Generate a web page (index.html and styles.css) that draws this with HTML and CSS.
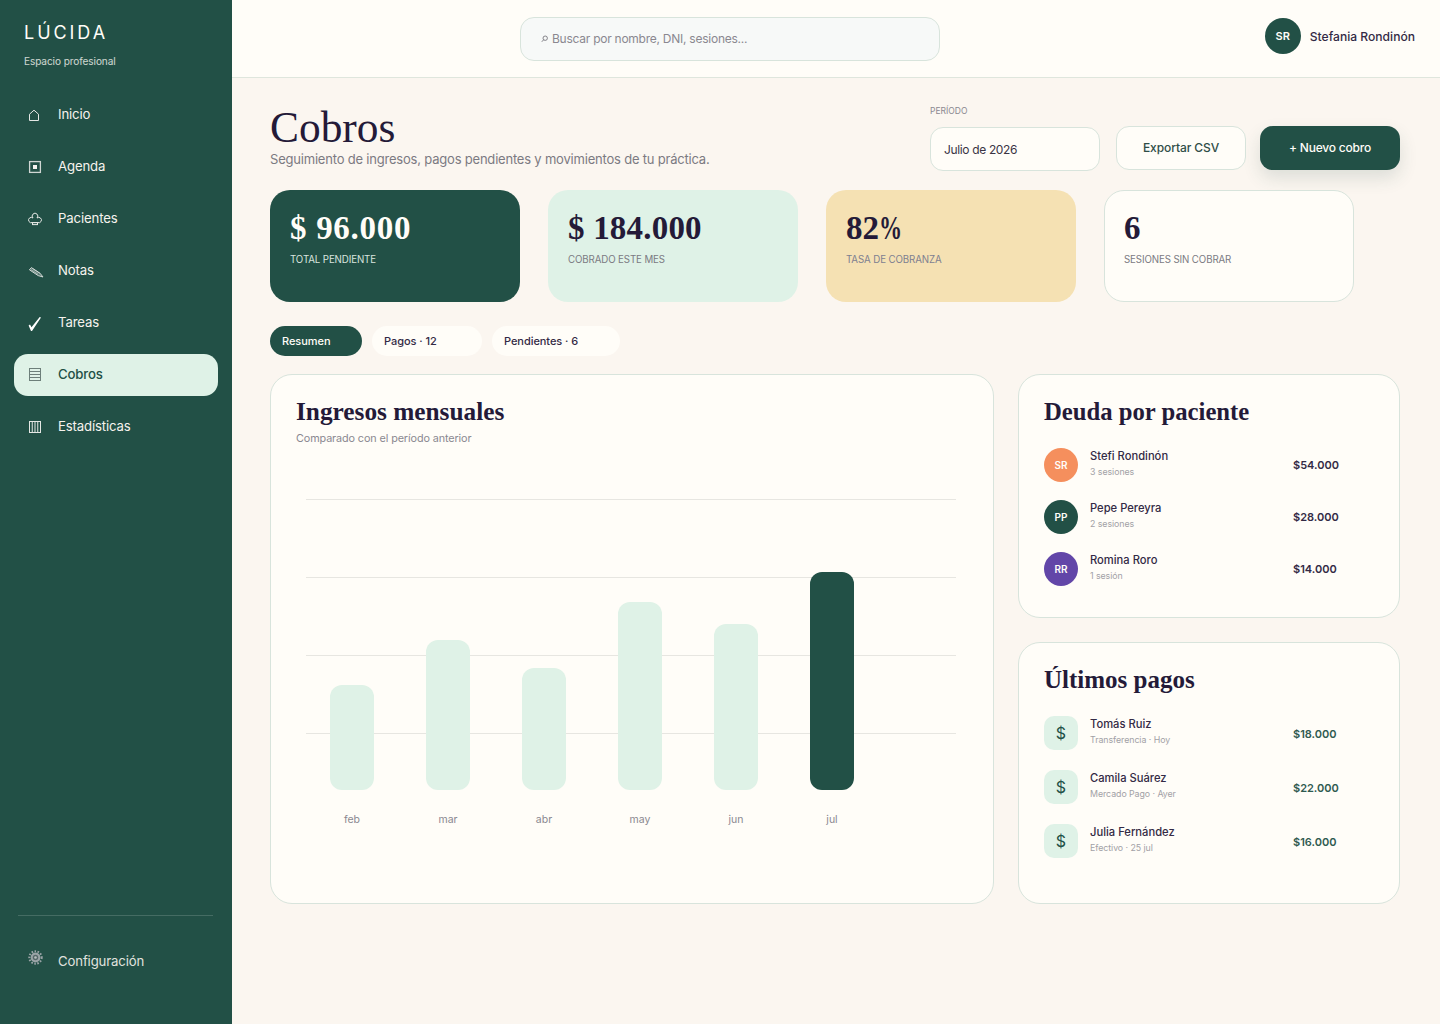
FILE: index.html
```html
<!DOCTYPE html>
<html lang="es">
<head>
<meta charset="utf-8">
<title>Lúcida · Cobros</title>
<link rel="stylesheet" href="styles.css">
</head>
<body>
<div class="app">
  <aside class="sidebar">
    <div class="brand">
      <div class="brand-name">LÚCIDA</div>
      <div class="brand-sub">Espacio profesional</div>
    </div>
    <nav class="nav">
      <a class="nav-item">
        <svg class="nav-icon" viewBox="0 0 16 16"><path class="ln" d="M1.5 13.5V7.2L6 3.2l4.5 4v6.3z"/></svg>
        <span>Inicio</span></a>
      <a class="nav-item">
        <svg class="nav-icon" viewBox="0 0 16 16"><rect class="ln ln-thick" x="1.6" y="2.6" width="10.8" height="10.8"/><rect class="fl" x="5" y="6" width="4" height="4"/></svg>
        <span>Agenda</span></a>
      <a class="nav-item">
        <svg class="nav-icon" viewBox="0 0 16 16"><path class="ln" d="M5 7A2.8 2.8 0 1 1 9 7 2.7 2.7 0 1 1 9.8 11.6H4.2A2.7 2.7 0 1 1 5 7z"/><rect class="ln" x="4.5" y="11.6" width="5" height="2"/></svg>
        <span>Pacientes</span></a>
      <a class="nav-item">
        <svg class="nav-icon" viewBox="0 0 16 16"><path class="ln ln-soft" d="M1.4 6.8 3.4 4.6 12 10.2 15 14 10.2 12.6z"/><path class="ln ln-thin" d="M3 6.6l7 4.6M4.6 5.6l7 4.6"/></svg>
        <span>Notas</span></a>
      <a class="nav-item">
        <svg class="nav-icon" viewBox="0 0 16 16"><path class="fl fl-white" d="M.6 10.6 2 9.6l1.5 2.7L11.7 2l1.3.6L4 16H3z"/></svg>
        <span>Tareas</span></a>
      <a class="nav-item nav-item-active">
        <svg class="nav-icon" viewBox="0 0 16 16"><rect class="ln" x="1.5" y="1.5" width="11" height="12"/><path class="ln" d="M1.5 4.5h11M1.5 7.5h11M1.5 10.5h11"/></svg>
        <span>Cobros</span></a>
      <a class="nav-item">
        <svg class="nav-icon" viewBox="0 0 16 16"><rect class="ln" x="1.5" y="2.5" width="11" height="11"/><path class="ln" d="M4.25 2.5v11M7 2.5v11M9.75 2.5v11"/></svg>
        <span>Estadísticas</span></a>
    </nav>
    <div class="sidebar-foot">
      <a class="nav-item nav-item-foot">
        <svg class="nav-icon nav-icon-gear" viewBox="0 0 16 16"><circle class="gear-teeth" cx="7.5" cy="7.5" r="6.2"/><circle class="gear-ring" cx="7.5" cy="7.5" r="4.9"/><circle class="gear-hole" cx="7.5" cy="7.5" r="2.7"/><circle class="gear-core" cx="7.5" cy="7.5" r="1.3"/></svg>
        <span>Configuración</span></a>
    </div>
  </aside>
  <div class="content">
    <header class="topbar">
      <div class="search">
        <svg class="search-icon" viewBox="0 0 7 8"><circle cx="4.2" cy="3.2" r="2.2"/><path d="M2.6 4.8.8 6.8"/></svg>
        <span>Buscar por nombre, DNI, sesiones...</span></div>
      <div class="user">
        <span class="user-avatar">SR</span>
        <span class="user-name">Stefania Rondinón</span>
      </div>
    </header>
    <main class="main">
      <section class="head">
        <div class="head-title">
          <h1>Cobros</h1>
          <p>Seguimiento de ingresos, pagos pendientes y movimientos de tu práctica.</p>
        </div>
        <div class="head-actions">
          <div class="period">
            <span class="period-label">PERÍODO</span>
            <div class="period-input">Julio de 2026</div>
          </div>
          <button class="btn btn-ghost">Exportar CSV</button>
          <button class="btn btn-primary">+ Nuevo cobro</button>
        </div>
      </section>
      <section class="stats">
        <div class="stat stat-green"><div class="stat-value">$ 96.000</div><div class="stat-label">TOTAL PENDIENTE</div></div>
        <div class="stat stat-mint"><div class="stat-value">$ 184.000</div><div class="stat-label">COBRADO ESTE MES</div></div>
        <div class="stat stat-yellow"><div class="stat-value">82<span class="pct">%</span></div><div class="stat-label">TASA DE COBRANZA</div></div>
        <div class="stat stat-white"><div class="stat-value">6</div><div class="stat-label">SESIONES SIN COBRAR</div></div>
      </section>
      <div class="tabs">
        <span class="tab tab-active tab-a">Resumen</span>
        <span class="tab tab-b">Pagos · 12</span>
        <span class="tab tab-c">Pendientes · 6</span>
      </div>
      <section class="panels">
        <article class="card card-chart">
          <h2>Ingresos mensuales</h2>
          <p class="card-sub">Comparado con el período anterior</p>
          <div class="plot">
            <div class="plot-lines"><i></i><i></i><i></i><i></i></div>
            <div class="plot-bars">
              <div class="bar" style="height:105px"></div>
              <div class="bar" style="height:150px"></div>
              <div class="bar" style="height:122px"></div>
              <div class="bar" style="height:188px"></div>
              <div class="bar" style="height:166px"></div>
              <div class="bar bar-now" style="height:218px"></div>
            </div>
          </div>
          <div class="months"><span>feb</span><span>mar</span><span>abr</span><span>may</span><span>jun</span><span>jul</span></div>
        </article>
        <div class="side">
          <article class="card card-debt">
            <h2>Deuda por paciente</h2>
            <ul class="rows rows-debt">
              <li class="row"><span class="avatar avatar-orange">SR</span><div class="who"><b>Stefi Rondinón</b><small>3 sesiones</small></div><span class="amount">$54.000</span></li>
              <li class="row"><span class="avatar avatar-green">PP</span><div class="who"><b>Pepe Pereyra</b><small>2 sesiones</small></div><span class="amount">$28.000</span></li>
              <li class="row"><span class="avatar avatar-purple">RR</span><div class="who"><b>Romina Roro</b><small>1 sesión</small></div><span class="amount">$14.000</span></li>
            </ul>
          </article>
          <article class="card card-pay">
            <h2>Últimos pagos</h2>
            <ul class="rows rows-pay">
              <li class="row"><span class="coin">$</span><div class="who"><b>Tomás Ruiz</b><small>Transferencia · Hoy</small></div><span class="amount amount-green">$18.000</span></li>
              <li class="row"><span class="coin">$</span><div class="who"><b>Camila Suárez</b><small>Mercado Pago · Ayer</small></div><span class="amount amount-green">$22.000</span></li>
              <li class="row"><span class="coin">$</span><div class="who"><b>Julia Fernández</b><small>Efectivo · 25 jul</small></div><span class="amount amount-green">$16.000</span></li>
            </ul>
          </article>
        </div>
      </section>
    </main>
  </div>
</div>
</body>
</html>
```
FILE: styles.css
```css
* { box-sizing: border-box; }
html, body { margin: 0; padding: 0; }
body {
  font-family: "Inter", "Liberation Sans", sans-serif;
  color: #241a38;
  background: #fbf6f0;
  -webkit-font-smoothing: antialiased;
}
h1, h2, p, ul { margin: 0; padding: 0; }
ul { list-style: none; }

.app { display: flex; width: 1440px; height: 1024px; overflow: hidden; }

.sidebar {
  width: 232px;
  flex: none;
  background: #225046;
  color: #fffdf8;
  display: flex;
  flex-direction: column;
  padding: 0 14px;
}
.brand { padding: 21px 10px 0; height: 94px; }
.brand-name { font-size: 18px; line-height: 24px; letter-spacing: 2.95px; font-weight: 400; }
.brand-sub { margin-top: 8px; font-size: 10.1px; line-height: 16px; letter-spacing: -0.1px; opacity: .78; }
.nav { display: flex; flex-direction: column; gap: 10px; }
.nav-item {
  display: flex;
  align-items: center;
  gap: 14px;
  height: 42px;
  padding: 0 14px;
  border-radius: 14px;
  font-size: 13.2px;
  letter-spacing: -0.15px;
  color: #f6f3ee;
}
.nav-item span { padding-bottom: 2px; }
.nav-icon { width: 16px; height: 16px; flex: none; overflow: visible; }
.ln { fill: none; stroke: #e4e7e4; stroke-width: 1; }
.ln-thick { stroke-width: 1.3; stroke: #cfd6d3; }
.ln-soft { fill: rgba(228,231,228,.3); stroke: #cfd6d3; }
.ln-thin { stroke-width: .7; opacity: .7; }
.fl { fill: #f4f4f0; }
.fl-white { fill: #ffffff; }
.nav-item-active { background: #dff2e7; color: #225046; font-weight: 500; }
.nav-item-active .ln { stroke: #6d7f7a; }
.sidebar-foot {
  margin: auto 5px 0 4px;
  border-top: 1px solid rgba(255,255,255,.16);
  padding-top: 24px;
  height: 109px;
}
.nav-item-foot { padding: 0 10px; opacity: .9; }
.nav-item-foot span { padding-bottom: 0; }
.nav-icon-gear { margin-top: -6px; }
.gear-teeth { fill: none; stroke: #a7adb1; stroke-width: 2; stroke-dasharray: 1.6 1.45; }
.gear-ring { fill: #a7adb1; }
.gear-hole { fill: #5c6b6d; }
.gear-core { fill: #c8cdcd; }

.content { flex: 1; min-width: 0; display: flex; flex-direction: column; }
.topbar {
  height: 78px;
  flex: none;
  background: #fffdf8;
  border-bottom: 1px solid #dfe6dd;
  display: flex;
  align-items: center;
  justify-content: space-between;
  padding: 0 25px 0 288px;
}
.search {
  width: 420px;
  height: 44px;
  margin-top: 1px;
  border: 1px solid #d8e4dc;
  border-radius: 14px;
  background: #f7f9f8;
  display: flex;
  align-items: center;
  gap: 4px;
  padding: 0 20px;
  font-size: 12px;
  letter-spacing: -0.25px;
  color: #8a8890;
}
.search span { padding-bottom: 1px; }
.search-icon { width: 7px; height: 8px; flex: none; fill: none; stroke: #77767d; stroke-width: .9; }
.user { display: flex; align-items: center; gap: 9px; margin-top: -5px; }
.user-avatar {
  width: 36px; height: 36px; border-radius: 50%;
  background: #225046; color: #fffdf8;
  display: flex; align-items: center; justify-content: center;
  font-size: 11px; font-weight: 600;
}
.user-name { font-size: 12.1px; font-weight: 500; color: #332a45; }

.main { flex: 1; padding: 26px 40px 0 38px; }
.head { display: flex; justify-content: space-between; height: 86px; }
.head-title h1 {
  font-family: "Liberation Serif", serif;
  font-weight: 400;
  font-size: 43.4px;
  line-height: 46px;
  color: #241a38;
}
.head-title p {
  margin-top: 1px;
  font-size: 13px;
  line-height: 16px;
  letter-spacing: -0.2px;
  color: #7b7a82;
}
.head-actions { display: flex; align-items: flex-start; gap: 16px; width: 470px; }
.period { width: 170px; flex: none; }
.period-label { display: block; font-size: 8.5px; line-height: 14px; color: #8a8890; }
.period-input {
  margin-top: 9px;
  height: 44px;
  background: #fffdf8;
  border: 1px solid #d8e4dc;
  border-radius: 13px;
  display: flex;
  align-items: center;
  padding: 0 13px;
  font-size: 12px;
  letter-spacing: -0.35px;
  color: #3a3444;
}
.btn {
  font-family: inherit;
  height: 44px;
  margin-top: 22px;
  padding: 0 0 1px;
  border-radius: 13px;
  font-size: 12px;
  font-weight: 500;
  letter-spacing: -0.1px;
  cursor: pointer;
}
.btn-ghost { width: 130px; flex: none; background: #fffdf8; border: 1px solid #d8e4dc; color: #2f4d47; }
.btn-primary { width: 140px; flex: none; margin-left: -2px; background: #225046; border: 0; color: #fffdf8; letter-spacing: -0.2px; box-shadow: 0 8px 18px rgba(34,80,70,.14); }

.stats { display: grid; grid-template-columns: repeat(4, 250px); gap: 28px; }
.stat { height: 112px; border-radius: 20px; padding: 19px 20px 0; }
.stat-value {
  font-family: "Liberation Serif", serif;
  font-weight: 700;
  font-size: 33px;
  line-height: 38px;
  color: #241a38;
}
.stat-label { margin-top: 6px; font-size: 9.7px; line-height: 14px; letter-spacing: -0.1px; color: #7b7a82; }
.stat-green { background: #225046; }
.stat-green .stat-value { color: #fffdf8; letter-spacing: .7px; }
.stat-green .stat-label { color: #d9e4df; }
.stat-mint { background: #dff2e7; }
.stat-mint .stat-value { letter-spacing: .2px; }
.stat-yellow { background: #f5e1b3; }
.pct { display: inline-block; transform: scaleX(.7); transform-origin: left center; }
.stat-yellow .stat-label { color: #7d7f90; }
.stat-white { background: #fffdf8; border: 1px solid #d8e4dc; padding: 18px 19px 0; }

.tabs { display: flex; gap: 10px; margin-top: 24px; }
.tab {
  height: 30px; border-radius: 15px; background: #fffdf8;
  display: flex; align-items: center; padding: 0 12px;
  font-size: 11px; font-weight: 500; letter-spacing: -0.05px; color: #332a45;
}
.tab-a { width: 92px; }
.tab-b { width: 110px; }
.tab-c { width: 128px; }
.tab-active { background: #225046; color: #fffdf8; }

.panels { display: grid; grid-template-columns: 724px 382px; gap: 24px; margin-top: 18px; }
.card { background: #fffdf8; border: 1px solid #d8e4dc; border-radius: 22px; padding: 21px 25px 0; }
.card h2 {
  font-family: "Liberation Serif", serif;
  font-weight: 700;
  font-size: 25px;
  line-height: 32px;
  color: #241a38;
}
.card-chart h2 { font-size: 25.3px; margin-top: -1px; }
.card-debt h2 { font-size: 24.7px; }
.card-sub { margin-top: 4px; font-size: 10.8px; line-height: 16px; letter-spacing: -0.1px; color: #8a8890; }
.card-chart { height: 530px; }
.plot { display: grid; grid-template-rows: 291px; width: 650px; margin: 52px 0 0 10px; }
.plot-lines, .plot-bars { grid-area: 1 / 1; }
.plot-lines { display: flex; flex-direction: column; }
.plot-lines i { display: block; height: 78px; flex: none; border-top: 1px solid #e7e6e1; }
.plot-bars { display: flex; align-items: flex-end; gap: 52px; padding-left: 24px; }
.bar { width: 44px; background: #dff2e7; border-radius: 12px; }
.bar-now { background: #225046; }
.months { display: flex; gap: 52px; margin: 23px 0 0 34px; }
.months span { width: 44px; text-align: center; font-size: 10.5px; line-height: 14px; color: #8a8890; }

.side { display: flex; flex-direction: column; gap: 24px; }
.card-debt { height: 244px; }
.card-pay { height: 262px; }
.rows { display: flex; flex-direction: column; margin-top: 20px; }
.rows-debt { gap: 18px; }
.rows-pay { gap: 20px; }
.row { display: flex; align-items: center; height: 34px; }
.avatar, .coin {
  width: 34px; height: 34px; flex: none;
  display: flex; align-items: center; justify-content: center;
  margin-right: 12px;
}
.avatar { border-radius: 50%; font-size: 10px; font-weight: 600; color: #fffdf8; }
.avatar-orange { background: #f58f5d; }
.avatar-green { background: #225046; }
.avatar-purple { background: #6246a8; }
.coin { border-radius: 10px; background: #dff2e7; color: #225046; font-size: 16px; }
.who { flex: 1; min-width: 0; display: flex; flex-direction: column; padding-bottom: 2px; }
.who b { font-size: 11.2px; line-height: 15px; margin-bottom: 1px; font-weight: 500; color: #332a45; }
.who small { font-size: 8.8px; line-height: 14px; letter-spacing: -0.05px; color: #a2a1a6; }
.amount { width: 81px; flex: none; font-size: 11px; font-weight: 600; color: #332a45; }
.amount-green { color: #2f5a50; padding-top: 2px; }
```
